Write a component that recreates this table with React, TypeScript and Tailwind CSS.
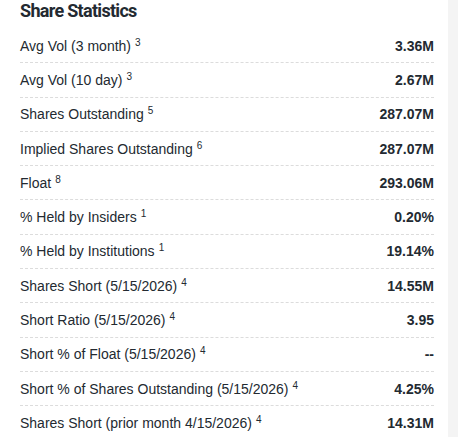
const rows: { label: string; note: number; value: string }[] = [
  { label: 'Avg Vol (3 month)', note: 3, value: '3.36M' },
  { label: 'Avg Vol (10 day)', note: 3, value: '2.67M' },
  { label: 'Shares Outstanding', note: 5, value: '287.07M' },
  { label: 'Implied Shares Outstanding', note: 6, value: '287.07M' },
  { label: 'Float', note: 8, value: '293.06M' },
  { label: '% Held by Insiders', note: 1, value: '0.20%' },
  { label: '% Held by Institutions', note: 1, value: '19.14%' },
  { label: 'Shares Short (5/15/2026)', note: 4, value: '14.55M' },
  { label: 'Short Ratio (5/15/2026)', note: 4, value: '3.95' },
  { label: 'Short % of Float (5/15/2026)', note: 4, value: '--' },
  { label: 'Short % of Shares Outstanding (5/15/2026)', note: 4, value: '4.25%' },
  { label: 'Shares Short (prior month 4/15/2026)', note: 4, value: '14.31M' },
];

export default function App() {
  return (
    <div className="flex h-[437px] w-[458px] overflow-hidden bg-white font-['Liberation_Sans',sans-serif] text-[#232a31]">
      <div className="w-[448px] pl-5 pr-[14px]">
        {/* Title */}
        <h3 className="flex h-[29px] items-start pt-[1px] font-['Roboto',sans-serif] text-[18px] font-bold leading-[20px] tracking-[-0.7px]">
          Share Statistics
        </h3>

        {/* Rows */}
        <div className="flex flex-col">
          {rows.map((r, i) => (
            <div
              key={r.label}
              className={
                i < rows.length - 1
                  ? 'flex h-[34.3px] items-center justify-between border-b border-dashed border-[#dcdcdc]'
                  : 'flex h-[34.3px] items-center justify-between'
              }
            >
              <span className="text-[14px] leading-none">
                {r.label}
                <sup className="ml-[4px] text-[10px]">{r.note}</sup>
              </span>
              <span className="text-[14px] font-bold leading-none">{r.value}</span>
            </div>
          ))}
        </div>
      </div>

      {/* scrollbar track */}
      <div className="h-full w-[10px] bg-[#f4f4f4]" />
    </div>
  );
}
